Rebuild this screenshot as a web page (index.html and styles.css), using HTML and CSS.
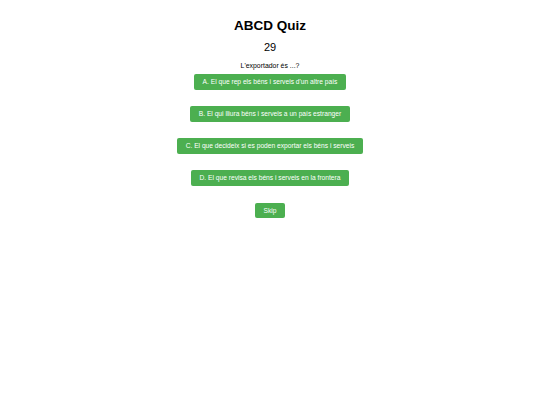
FILE: index.html
```html
<!DOCTYPE html>
<html lang="ca">
<head>
<meta charset="utf-8">
<title>ABCD Quiz</title>
<link rel="stylesheet" href="styles.css">
</head>
<body>
<main class="quiz">
  <h1 class="title">ABCD Quiz</h1>
  <div class="score">29</div>
  <p class="question">L'exportador és ...?</p>
  <div class="answers">
    <button class="btn">A. El que rep els béns i serveis d'un altre país</button>
    <button class="btn">B. El qui lliura béns i serveis a un país estranger</button>
    <button class="btn">C. El que decideix si es poden exportar els béns i serveis</button>
    <button class="btn">D. El que revisa els béns i serveis en la frontera</button>
  </div>
  <button class="btn skip">Skip</button>
</main>
</body>
</html>
```
FILE: styles.css
```css
html, body {
  margin: 0;
  padding: 0;
  background: #ffffff;
}
body {
  font-family: "Liberation Sans", Arial, sans-serif;
  color: #000;
}
.quiz {
  display: flex;
  flex-direction: column;
  align-items: center;
  padding-top: 18px;
}
.title {
  margin: 0;
  font-size: 13.5px;
  line-height: 16px;
  font-weight: bold;
}
.score {
  margin-top: 6px;
  font-size: 11px;
  line-height: 14px;
}
.question {
  margin: 7px 0 0 0;
  font-size: 6.9px;
  line-height: 10px;
}
.answers {
  margin-top: 3px;
  display: flex;
  flex-direction: column;
  align-items: center;
  gap: 16px;
}
.btn {
  font-family: "Liberation Sans", Arial, sans-serif;
  font-size: 6.67px;
  line-height: 16px;
  height: 16px;
  padding: 0 8.5px;
  border: none;
  border-radius: 2px;
  background: #4caf50;
  color: #fff;
  cursor: pointer;
}
.skip {
  margin-top: 17px;
  height: 15px;
  line-height: 15px;
}
```
